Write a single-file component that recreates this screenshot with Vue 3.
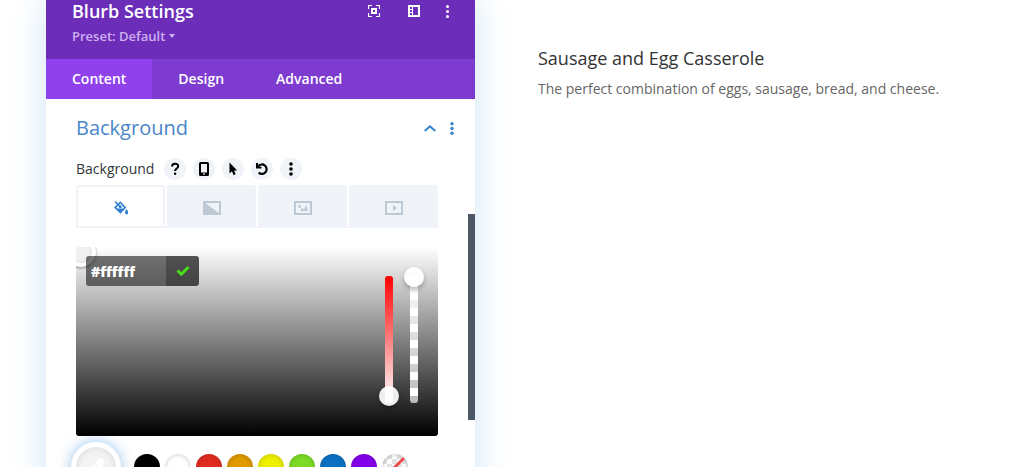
<script setup>
import { ref } from 'vue'

const tabs = ['Content', 'Design', 'Advanced']
const activeTab = ref('Content')
const fills = ['Color', 'Gradient', 'Image', 'Video']
const activeFill = ref('Color')
const hex = ref('#ffffff')
const tone = ref(0)
const alpha = ref(100)
const swatches = [
  { name: 'Black', color: '#000000' },
  { name: 'White', color: '#ffffff' },
  { name: 'Red', color: '#e02b20' },
  { name: 'Orange', color: '#e09900' },
  { name: 'Yellow', color: '#edf000' },
  { name: 'Green', color: '#7cda24' },
  { name: 'Blue', color: '#0c71c3' },
  { name: 'Purple', color: '#8300e9' },
]
</script>

<template>
  <div class="page">
    <section class="panel" aria-label="Blurb Settings">
      <header class="head">
        <div class="titles">
          <h1>Blurb Settings</h1>
          <button class="preset">Preset: Default <span class="caret"></span></button>
        </div>
        <div class="tools">
          <button aria-label="Expand">
            <svg width="12" height="12" viewBox="0 0 12 12" fill="none" stroke="#fff">
              <path d="M.5 4V.5H4M8 .5h3.500V4M11.500 8v3.500H8M4 11.500H.5V8" stroke-width="1.200" />
              <path d="M4 4h4v4H4z" stroke-width="2" />
            </svg>
          </button>
          <button aria-label="Dock panel">
            <svg width="12" height="12" viewBox="0 0 12 12">
              <path fill="#fff" fill-rule="evenodd" d="M0 0h12v12H0zM5 2v8h5V2zM2 2v2h2V2zM2 5v2h2V5zM2 8v2h2V8z" />
            </svg>
          </button>
          <button class="narrow" aria-label="More options">
            <svg width="3" height="13" viewBox="0 0 3 13" fill="#fff">
              <circle cx="1.500" cy="1.500" r="1.500" /><circle cx="1.500" cy="6.500" r="1.500" /><circle cx="1.500" cy="11.500" r="1.500" />
            </svg>
          </button>
        </div>
      </header>

      <nav class="tabs">
        <button v-for="t in tabs" :key="t" :class="{ active: t === activeTab }" @click="activeTab = t">{{ t }}</button>
      </nav>

      <div class="body">
        <div class="group-head">
          <h2>Background</h2>
          <button aria-label="Collapse">
            <svg width="12" height="7" viewBox="0 0 12 7" fill="none" stroke="#3a84ce" stroke-width="2"><path d="M.7 6 6 1.400 11.300 6" /></svg>
          </button>
          <button aria-label="Background options">
            <svg width="4" height="13" viewBox="0 0 4 13" fill="#3a84ce">
              <circle cx="2" cy="1.700" r="1.700" /><circle cx="2" cy="6.500" r="1.700" /><circle cx="2" cy="11.300" r="1.700" />
            </svg>
          </button>
        </div>

        <div class="field-head">
          <span class="label">Background</span>
          <button aria-label="Help">
            <svg width="14" height="14" viewBox="0 0 14 14"><path d="M4 4.500C4 .7 10.200.8 10.200 4.300 10.200 6.500 7.100 6.500 7.100 9" fill="none" stroke="#000" stroke-width="2" /><path d="M6 10.600h2.200v2.200H6z" /></svg>
          </button>
          <button aria-label="Responsive">
            <svg width="14" height="14" viewBox="0 0 14 14"><path fill-rule="evenodd" d="M3.500 0h7A1.500 1.500 0 0 1 12 1.500v11a1.500 1.500 0 0 1-1.500 1.500h-7A1.500 1.500 0 0 1 2 12.500v-11A1.500 1.500 0 0 1 3.500 0zM4 2v8.500h6V2zM6.200 11.300v1.400h1.600v-1.400z" /></svg>
          </button>
          <button aria-label="Hover">
            <svg width="14" height="14" viewBox="0 0 14 14"><path d="M3.500.5v11l2.500-2.200 1.600 3.900 2.100-.9-1.600-3.700h3.100z" /></svg>
          </button>
          <button aria-label="Reset">
            <svg width="14" height="14" viewBox="0 0 14 14"><path d="M3.200 4.300a4.700 4.700 0 1 1 .5 6.300" fill="none" stroke="#000" stroke-width="2.200" /><path d="M1 1v5.500h5.500V4.700L3.500 4.500 3 1z" /></svg>
          </button>
          <button aria-label="More">
            <svg width="14" height="14" viewBox="0 0 14 14"><circle cx="7" cy="2" r="1.800" /><circle cx="7" cy="7" r="1.800" /><circle cx="7" cy="12" r="1.800" /></svg>
          </button>
        </div>

        <div class="fills">
          <button v-for="f in fills" :key="f" :aria-label="f" :class="{ active: f === activeFill }" @click="activeFill = f">
            <svg v-if="f === 'Color'" width="16" height="16" viewBox="0 0 16 16">
              <path d="M2 1.500l5.500 5.500" stroke="#2f80d0" stroke-width="1.600" />
              <path fill="#2f80d0" fill-rule="evenodd" d="M7.300 1.200 13.300 7.500 7.500 13.800 1 7.500zM7.300 3.500 3.300 7.500 4.500 8.600h5.600L11 7.500z" />
              <circle cx="7.300" cy="6.800" r="1.500" fill="#2f80d0" />
              <path fill="#2f80d0" d="M13.500 9c2.300 3 2.100 5.300.2 5.300s-2.400-2.300-.2-5.300z" />
            </svg>
            <svg v-else width="18" height="14" viewBox="0 0 18 14">
              <path d="M1 1h16v12H1z" fill="none" stroke="#bdc9d5" stroke-width="2" />
              <path v-if="f === 'Gradient'" d="M1 1l16 12H1z" fill="#bdc9d5" />
              <g v-else-if="f === 'Image'" fill="#bdc9d5"><circle cx="5.500" cy="5.500" r="1.500" /><path d="M6 10l2-3 2 1.500L12 4l2 6z" /></g>
              <path v-else d="M8 4l4 3-4 3z" fill="#bdc9d5" />
            </svg>
          </button>
        </div>

        <div class="picker">
          <span class="point"></span>
          <div class="hex">
            <input v-model="hex" type="text" aria-label="Hex color" />
            <button aria-label="Apply color">
              <svg width="14" height="12" viewBox="0 0 14 12"><path d="M1.500 5.500 5.300 9.200 12.500 2" fill="none" stroke="#46e01b" stroke-width="3" /></svg>
            </button>
          </div>
          <div class="sliders">
            <div class="slider">
              <span class="rail tone"></span>
              <input v-model="tone" type="range" aria-label="Saturation" />
            </div>
            <div class="slider">
              <span class="rail alpha"></span>
              <input v-model="alpha" type="range" aria-label="Opacity" />
            </div>
          </div>
        </div>

        <div class="swatches">
          <button class="current" aria-label="Pick color">
            <svg width="20" height="20" viewBox="0 0 20 20" fill="#fff"><path d="M12 3c3-4 8 0 5 4l-2 1 1 2-1.500 1.500-6-6L10 4l2 1zM8 7l4.500 4.500L5 18l-3.500 1L2 15z" /></svg>
          </button>
          <button v-for="s in swatches" :key="s.name" class="swatch" :aria-label="s.name" :style="{ backgroundColor: s.color }" @click="hex = s.color"></button>
          <button class="swatch none" aria-label="Transparent">
            <svg width="26" height="26" viewBox="0 0 26 26"><path d="M4 22 22 4" stroke="#ee4b50" stroke-width="3" /></svg>
          </button>
        </div>
      </div>
      <span class="scrollbar"></span>
    </section>

    <main class="preview">
      <h2>Sausage and Egg Casserole</h2>
      <p>The perfect combination of eggs, sausage, bread, and cheese.</p>
    </main>
  </div>
</template>

<style>
body {
  margin: 0;
  background: #fff;
}
</style>

<style scoped>
.page {
  box-sizing: border-box;
  display: grid;
  grid-template-columns: minmax(0, 429fr) minmax(0, 550fr);
  height: 100vh;
  padding-left: 46px;
  overflow: hidden;
  font-family: "Open Sans", sans-serif;
}
h1, h2, p {
  margin: 0;
}
button {
  display: flex;
  align-items: center;
  justify-content: center;
  margin: 0;
  padding: 0;
  border: 0;
  background: none;
  color: inherit;
  font: inherit;
  cursor: pointer;
}
svg {
  display: block;
  flex: none;
}
.panel {
  position: relative;
  min-height: 500px;
  background: #fff;
  box-shadow: 0 0 32px rgba(43, 135, 218, 0.22);
}
.head {
  box-sizing: border-box;
  display: flex;
  justify-content: space-between;
  height: 59px;
  padding: 0 14px 0 26px;
  background: #6c2eb9;
  color: #fff;
}
h1 {
  font-size: 18px;
  line-height: 22px;
  font-weight: 600;
}
.preset {
  gap: 4px;
  margin-top: 4px;
  color: #cfb0f0;
  font-size: 13px;
  line-height: 20px;
  font-weight: 600;
}
.caret {
  border: 3px solid transparent;
  border-top: 4px solid #cfb0f0;
  border-bottom: 0;
}
.tools {
  display: flex;
}
.tools button {
  width: 40px;
  height: 22px;
}
.tools .narrow {
  width: 27px;
}
.tabs {
  display: flex;
  height: 40px;
  background: #7e3bd0;
  color: #fff;
  font-size: 14px;
  font-weight: 600;
}
.tabs button {
  padding: 0 26px 2px;
}
.tabs .active {
  background: #8f42ec;
}
.body {
  padding: 14px 37px 0 30px;
}
.group-head {
  display: flex;
  align-items: center;
  height: 30px;
  margin-right: -25px;
}
.group-head h2 {
  flex: 1;
  color: #4a86c8;
  font-size: 20px;
  line-height: 30px;
  font-weight: 400;
}
.group-head button {
  width: 22px;
  height: 22px;
}
.field-head {
  display: flex;
  align-items: center;
  gap: 7px;
  height: 22px;
  margin-top: 15px;
}
.label {
  margin-right: 3px;
  color: #32373c;
  font-size: 14px;
  line-height: 22px;
  font-weight: 500;
}
.field-head button {
  width: 22px;
  height: 22px;
  border-radius: 50%;
  background: #f0f3f8;
}
.fills {
  display: grid;
  grid-template-columns: repeat(4, 1fr);
  gap: 2px;
  height: 41px;
  margin-top: 5px;
  border-bottom: 2px solid #f0f3f8;
}
.fills button {
  padding-top: 4px;
  border-radius: 3px 3px 0 0;
  background: #f0f3f8;
}
.fills .active {
  border: 2px solid #f0f3f8;
  border-bottom: 0;
  padding-top: 2px;
  background: #fff;
}
.picker {
  position: relative;
  box-sizing: border-box;
  display: flex;
  justify-content: space-between;
  align-items: flex-start;
  height: 189px;
  margin-top: 19px;
  padding: 9px 14px 0 10px;
  overflow: hidden;
  border-radius: 3px;
  background: linear-gradient(#fff, #000);
}
.point {
  position: absolute;
  top: -10px;
  left: -10px;
  box-sizing: border-box;
  width: 30px;
  height: 30px;
  border: 4px solid #fff;
  border-radius: 50%;
  background: #f0f0f0;
  box-shadow: 0 1px 3px rgba(0, 0, 0, 0.4), inset 0 0 3px rgba(0, 0, 0, 0.15);
}
.hex {
  position: relative;
  display: flex;
  height: 30px;
  overflow: hidden;
  border-radius: 3px;
}
.hex input {
  box-sizing: border-box;
  width: 80px;
  margin: 0;
  padding: 0 5px;
  border: 0;
  outline: 0;
  background: rgba(0, 0, 0, 0.54);
  color: #fff;
  font: 800 14px "Open Sans", sans-serif;
  font-variant-ligatures: none;
}
.hex button {
  width: 33px;
  background: rgba(0, 0, 0, 0.67);
}
.sliders {
  display: flex;
  gap: 5px;
  margin-top: 11px;
}
.slider {
  display: grid;
  width: 20px;
  height: 139px;
}
.slider > * {
  grid-area: 1 / 1;
}
.rail {
  justify-self: center;
  width: 8px;
  margin: 9px 0 3px;
  border-radius: 3px;
}
.tone {
  background: linear-gradient(#f00, #fff);
}
.alpha {
  background:
    linear-gradient(#fff, rgba(255, 255, 255, 0)),
    repeating-linear-gradient(#fff 0 8px, #bbb 8px 16px);
}
.slider input {
  appearance: none;
  writing-mode: vertical-lr;
  direction: rtl;
  width: 20px;
  height: 139px;
  margin: 0;
  background: none;
}
.slider input::-webkit-slider-thumb {
  appearance: none;
  width: 20px;
  height: 20px;
  border-radius: 50%;
  background: rgba(255, 255, 255, 0.92);
  box-shadow: 0 3px 5px rgba(0, 0, 0, 0.25);
}
.swatches {
  display: flex;
  align-items: center;
  gap: 5px;
  margin: 6px 0 0 -5px;
}
.current {
  width: 50px;
  height: 50px;
  margin-right: 8px;
  border: 5px solid #fff;
  border-radius: 50%;
  background: #f4f4f4;
  background-clip: padding-box;
  box-shadow: 0 0 14px rgba(43, 135, 218, 0.5), inset 0 0 8px rgba(0, 0, 0, 0.12);
}
.swatch {
  flex: none;
  width: 26px;
  height: 26px;
  border-radius: 50%;
  box-shadow: inset 0 0 5px rgba(0, 0, 0, 0.22);
}
.none {
  background: repeating-conic-gradient(#e2e2e2 0 25%, #fff 0 50%) 0 0 / 10px 10px;
}
.scrollbar {
  position: absolute;
  top: 214px;
  right: 0;
  width: 7px;
  height: 206px;
  background: #4c5866;
}
.preview {
  padding: 45px 24px 0 63px;
}
.preview h2 {
  color: #333;
  font-size: 18px;
  line-height: 26px;
  font-weight: 400;
}
.preview p {
  margin-top: 6px;
  color: #666;
  font-size: 14px;
  line-height: 24px;
}
</style>
